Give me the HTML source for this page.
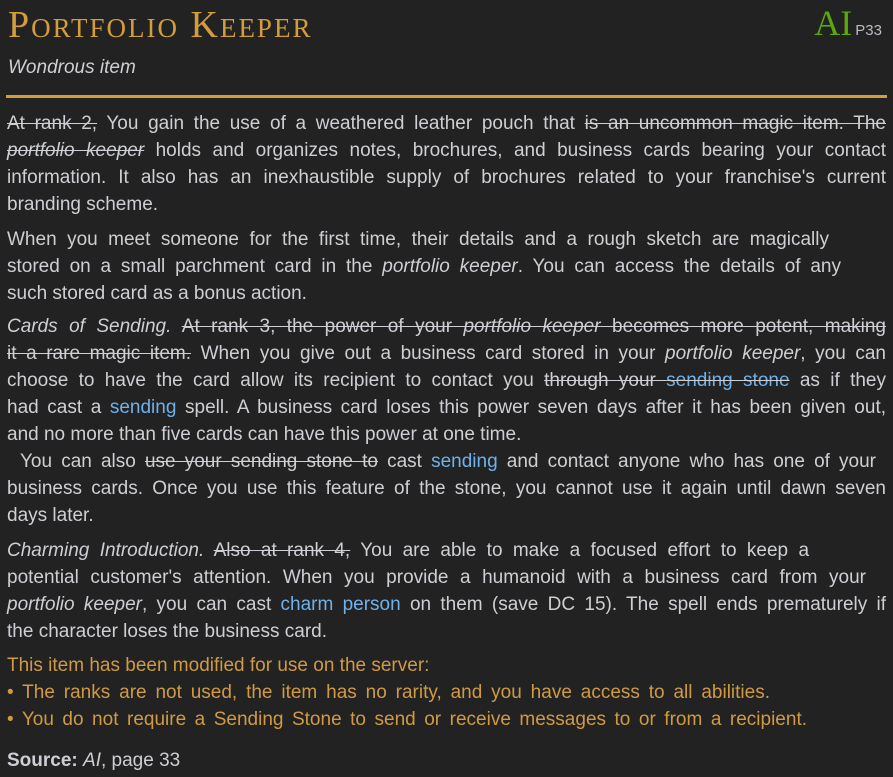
<!DOCTYPE html>
<html><head><meta charset="utf-8"><style>
html,body{margin:0;padding:0;background:#222;}
body{width:893px;height:777px;overflow:hidden;position:relative;font-family:"Liberation Sans","DejaVu Sans",sans-serif;color:#cdcfd4;font-size:19px;}
.t{position:absolute;left:8px;top:1px;font-family:"Liberation Serif",serif;color:#d39d3b;font-size:38px;font-variant:small-caps;letter-spacing:2px;line-height:48px;}
.ai{position:absolute;right:11px;top:3px;font-family:"Liberation Serif",serif;color:#5aa70e;font-size:36px;line-height:40px;}
.ai span{font-family:"Liberation Sans",sans-serif;color:#b8bcc4;font-size:15px;margin-left:3px;}
.sub{position:absolute;left:8px;top:57px;font-style:italic;font-size:19px;}
.hr{position:absolute;left:6px;top:95px;width:881px;height:3px;background:#d39d3b;}
.l{position:absolute;left:7px;width:879px;white-space:nowrap;height:27px;line-height:27px;}
.j{text-align:justify;text-align-last:justify;white-space:normal;}
s{text-decoration:line-through;}
a{color:#6fb1e8;text-decoration:none;}
.g{color:#d09a45;}
</style></head><body>
<div class="t">Portfolio Keeper</div>
<div class="ai">AI<span>P33</span></div>
<div class="sub">Wondrous item</div>
<div class="hr"></div>

<div class="l j" style="top:110px"><s>At rank 2,</s> You gain the use of a weathered leather pouch that <s>is an uncommon magic item. The</s></div>
<div class="l j" style="top:137px"><s><i>portfolio keeper</i></s> holds and organizes notes, brochures, and business cards bearing your contact</div>
<div class="l j" style="top:164px">information. It also has an inexhaustible supply of brochures related to your franchise's current</div>
<div class="l" style="top:191px">branding scheme.</div>

<div class="l" style="top:226px;width:822px;" ><div class="j">When you meet someone for the first time, their details and a rough sketch are magically</div></div>
<div class="l" style="top:253px;width:834px;"><div class="j">stored on a small parchment card in the <i>portfolio keeper</i>. You can access the details of any</div></div>
<div class="l" style="top:280px">such stored card as a bonus action.</div>

<div class="l j" style="top:313px"><i>Cards of Sending.</i> <s>At rank 3, the power of your <i>portfolio keeper</i> becomes more potent, making</s></div>
<div class="l j" style="top:340px"><s>it a rare magic item.</s> When you give out a business card stored in your <i>portfolio keeper</i>, you can</div>
<div class="l j" style="top:367px">choose to have the card allow its recipient to contact you <s>through your <a>sending stone</a></s> as if they</div>
<div class="l j" style="top:394px">had cast a <a>sending</a> spell. A business card loses this power seven days after it has been given out,</div>
<div class="l" style="top:421px">and no more than five cards can have this power at one time.</div>
<div class="l j" style="top:448px;left:20px;width:856px">You can also <s>use your sending stone to</s> cast <a>sending</a> and contact anyone who has one of your</div>
<div class="l j" style="top:475px">business cards. Once you use this feature of the stone, you cannot use it again until dawn seven</div>
<div class="l" style="top:502px">days later.</div>

<div class="l" style="top:537px;width:802px"><div class="j"><i>Charming Introduction.</i> <s>Also at rank 4,</s> You are able to make a focused effort to keep a</div></div>
<div class="l" style="top:564px;width:859px"><div class="j">potential customer's attention. When you provide a humanoid with a business card from your</div></div>
<div class="l j" style="top:591px"><i>portfolio keeper</i>, you can cast <a>charm person</a> on them (save DC 15). The spell ends prematurely if</div>
<div class="l" style="top:618px">the character loses the business card.</div>

<div class="l g" style="top:652px">This item has been modified for use on the server:</div>
<div class="l g" style="top:679px;width:763px"><div class="j">• The ranks are not used, the item has no rarity, and you have access to all abilities.</div></div>
<div class="l g" style="top:706px;width:800px"><div class="j">• You do not require a Sending Stone to send or receive messages to or from a recipient.</div></div>

<div class="l" style="top:747px"><b>Source:</b> <i>AI</i>, page 33</div>
</body></html>
